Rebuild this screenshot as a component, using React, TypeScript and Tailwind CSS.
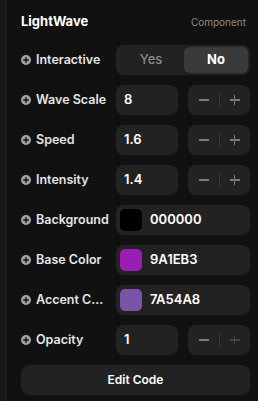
import React from "react";

function PlusCircle() {
  return (
    <svg width="10" height="10" viewBox="0 0 10 10" className="shrink-0">
      <circle cx="5" cy="5" r="5" fill="#a3a3a3" />
      <rect x="2.2" y="4.25" width="5.6" height="1.5" fill="#111111" />
      <rect x="4.25" y="2.2" width="1.5" height="5.6" fill="#111111" />
    </svg>
  );
}

function Label({ text }: { text: string }) {
  return (
    <div className="flex items-center gap-[5px] w-[95px] shrink-0">
      <PlusCircle />
      <span className="text-[12.5px] font-semibold text-[#e5e5e5] whitespace-nowrap">{text}</span>
    </div>
  );
}

function Stepper({ dimPlus }: { dimPlus?: boolean }) {
  return (
    <div className="w-[62px] h-[30px] rounded-lg bg-[#222222] flex items-center justify-center">
      <span className="w-[14px] flex justify-center">
        <span className="block w-[10px] h-[1.5px] bg-[#7a7a7a]" />
      </span>
      <span className="block w-px h-[12px] bg-[#3a3a3a] mx-[8px]" />
      <span className="w-[14px] h-[12px] relative">
        <span className={`absolute left-[2px] top-[5.25px] w-[10px] h-[1.5px] ${dimPlus ? "bg-[#444444]" : "bg-[#7a7a7a]"}`} />
        <span className={`absolute left-[6.25px] top-[1px] w-[1.5px] h-[10px] ${dimPlus ? "bg-[#444444]" : "bg-[#7a7a7a]"}`} />
      </span>
    </div>
  );
}

function NumRow({ label, value, dimPlus }: { label: string; value: string; dimPlus?: boolean }) {
  return (
    <div className="flex items-center h-[30px]">
      <Label text={label} />
      <div className="flex gap-[10px]">
        <div className="w-[62px] h-[30px] rounded-lg bg-[#222222] flex items-center pl-[8px] text-[13px] font-semibold text-white">
          {value}
        </div>
        <Stepper dimPlus={dimPlus} />
      </div>
    </div>
  );
}

function ColorRow({ label, color, hex }: { label: string; color: string; hex: string }) {
  return (
    <div className="flex items-center h-[30px]">
      <Label text={label} />
      <div className="w-[134px] h-[30px] rounded-lg bg-[#222222] flex items-center pl-[4px] gap-[8px]">
        <div className="w-[22px] h-[22px] rounded-[5px]" style={{ backgroundColor: color }} />
        <span className="text-[13px] font-semibold text-white">{hex}</span>
      </div>
    </div>
  );
}

export default function App() {
  return (
    <div
      className="w-[258px] h-[401px] bg-[#111111] flex"
      style={{ fontFamily: "Inter, 'Noto Sans', sans-serif" }}
    >
      <div className="w-[6px] bg-[#181818] shrink-0" />
      <div className="w-px bg-[#1f1f1f] shrink-0" />
      <div className="flex-1 pl-[14px] pr-[8px] pt-[14px]">
        <div className="flex items-center justify-between h-[16px] mb-[15px]">
          <span className="text-[13px] font-bold text-white">LightWave</span>
          <span className="text-[10px] text-[#8a8a8a] pr-[4px]">Component</span>
        </div>
        <div className="flex flex-col gap-[10px]">
          <div className="flex items-center h-[30px]">
            <Label text="Interactive" />
            <div className="w-[134px] h-[30px] rounded-lg bg-[#222222] flex items-center p-[2px]">
              <div className="flex-1 h-full flex items-center justify-center text-[13px] font-medium text-[#8a8a8a]">Yes</div>
              <div className="w-[64px] h-full rounded-md bg-[#3a3a3a] flex items-center justify-center text-[13px] font-bold text-white">No</div>
            </div>
          </div>
          <NumRow label="Wave Scale" value="8" />
          <NumRow label="Speed" value="1.6" />
          <NumRow label="Intensity" value="1.4" />
          <ColorRow label="Background" color="#000000" hex="000000" />
          <ColorRow label="Base Color" color="#9A1EB3" hex="9A1EB3" />
          <ColorRow label="Accent C..." color="#7A54A8" hex="7A54A8" />
          <NumRow label="Opacity" value="1" dimPlus />
          <div className="h-[30px] w-[229px] rounded-lg bg-[#222222] flex items-center justify-center text-[12px] font-semibold text-white">
            Edit Code
          </div>
        </div>
      </div>
    </div>
  );
}
